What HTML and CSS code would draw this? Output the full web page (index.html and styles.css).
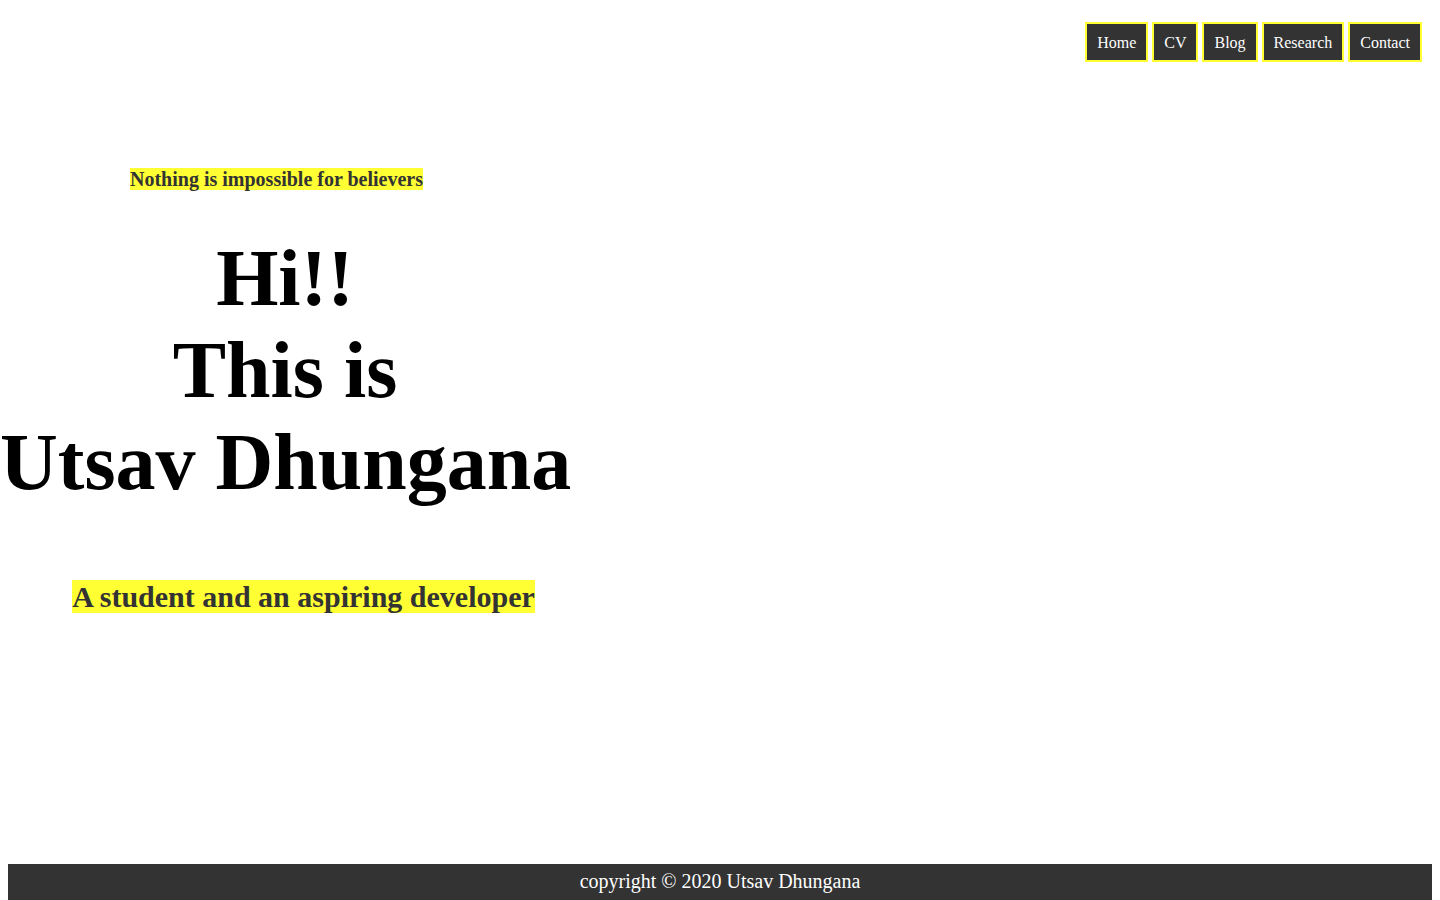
FILE: index.html
```html
<!DOCTYPE html>
<html lang="en">
<head>
<meta charset="utf-8">
<title>Utsav Dhungana</title>
<link rel="stylesheet" href="styles.css">
</head>
<body>
<div class="page">
  <nav class="nav">
    <a class="nav-link" href="#">Home</a>
    <a class="nav-link" href="#">CV</a>
    <a class="nav-link" href="#">Blog</a>
    <a class="nav-link" href="#">Research</a>
    <a class="nav-link" href="#">Contact</a>
  </nav>
  <main class="hero">
    <p class="quote"><span class="mark">Nothing is impossible for believers</span></p>
    <h1 class="title">Hi!!<br>This is<br>Utsav Dhungana</h1>
    <h2 class="subtitle"><span class="mark">A student and an aspiring developer</span></h2>
  </main>
  <footer class="footer">copyright &copy; 2020 Utsav Dhungana</footer>
</div>
</body>
</html>
```
FILE: styles.css
```css
html, body {
  margin: 0;
  padding: 0;
  background: #ffffff;
}
body {
  font-family: "Liberation Serif", "Times New Roman", serif;
  color: #000;
}
.page {
  min-height: 100vh;
  display: flex;
  flex-direction: column;
}
.nav {
  display: flex;
  justify-content: flex-end;
  gap: 4px;
  padding: 22px 18px 0 0;
}
.nav-link {
  display: block;
  background: #333333;
  color: #ffffff;
  border: 2px solid #ffff33;
  padding: 10px 10px 8px;
  font-size: 16px;
  line-height: 18px;
  height: 18px;
  text-decoration: none;
}
.hero {
  width: 570px;
  text-align: center;
  margin-top: 106px;
}
.quote {
  margin: 0;
  padding-right: 17px;
  font-size: 20px;
  font-weight: bold;
  line-height: 23px;
  color: #333333;
}
.mark {
  background: #ffff33;
}
.title {
  margin: 41px 0 0;
  font-size: 80px;
  font-weight: bold;
  line-height: 92px;
  white-space: nowrap;
}
.subtitle {
  margin: 72px 0 0;
  padding-left: 37px;
  font-size: 30px;
  line-height: 33px;
  font-weight: bold;
  color: #333333;
  white-space: nowrap;
}
.footer {
  margin: auto 8px 0;
  background: #333333;
  color: #ffffff;
  text-align: center;
  font-size: 20px;
  line-height: 23px;
  padding: 6px 0 7px;
}
```
